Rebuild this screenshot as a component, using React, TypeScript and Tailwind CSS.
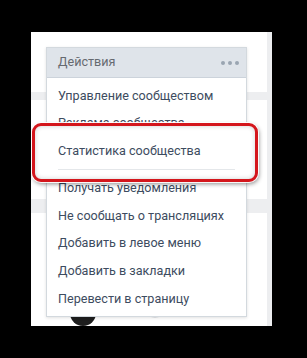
import React from 'react';

const topItems = ['Управление сообществом', 'Реклама сообщества'];
const bottomItems = [
  'Получать уведомления',
  'Не сообщать о трансляциях',
  'Добавить в левое меню',
  'Добавить в закладки',
  'Перевести в страницу',
];

function MenuItem({ label }: { label: string }) {
  return (
    <div className="flex h-[27.6px] items-center px-[11px] text-[12.6px] leading-none text-[#3d4c60]">
      {label}
    </div>
  );
}

export default function App() {
  return (
    <div
      className="h-[358px] w-[307px] bg-black pl-[31px] pt-[32px]"
      style={{ fontFamily: 'Roboto, "Noto Sans", Arial, sans-serif' }}
    >
      <div className="relative flex h-[294px] w-[241px] bg-[#edeef0]">
        {/* page behind the dropdown */}
        <div className="flex w-[236px] flex-col">
          <div className="h-[65px] bg-white" />
          <div className="mt-[8px] h-[108px] bg-white" />
          <div className="mt-[14px] flex flex-1 items-start gap-[50px] bg-white pl-[39px] pt-[87px]">
            <div className="h-[26px] w-[26px] rounded-full bg-[#1e1e1e]" />
            <div className="h-[18px] w-[18px] rounded-full bg-[#e4e6e9]" />
          </div>
        </div>

        {/* dropdown */}
        <div className="absolute left-[15px] top-[15px] w-[201px] border border-[#d3d9de] bg-white shadow-[0_1px_3px_rgba(0,0,0,0.12)]">
          <div className="flex h-[30px] items-center justify-between border-b border-[#ccd3db] bg-[#dfe4ea] pl-[11px] pr-[7px]">
            <span className="text-[12.6px] text-[#666a70]">Действия</span>
            <div className="flex gap-[3px]">
              <span className="h-[4px] w-[4px] rounded-full bg-[#9aa5b1]" />
              <span className="h-[4px] w-[4px] rounded-full bg-[#9aa5b1]" />
              <span className="h-[4px] w-[4px] rounded-full bg-[#9aa5b1]" />
            </div>
          </div>
          <div className="pb-[3px] pt-[4px]">
            {topItems.map((item) => (
              <MenuItem key={item} label={item} />
            ))}

            {/* highlighted row with red frame */}
            <div className="relative">
              <div className="absolute bottom-[-7px] left-[-15px] right-[-12px] top-[-14px] z-[1] rounded-[9px] border-[3px] border-[#d4161c] bg-white shadow-[0_0_0_1px_rgba(255,255,255,0.9),1px_2px_4px_rgba(0,0,0,0.45),inset_0_0_5px_rgba(0,0,0,0.18)]" />
              <div className="relative z-[2]">
                <MenuItem label="Статистика сообщества" />
                <div className="flex h-[10px] items-center px-[11px]">
                  <div className="h-px w-full bg-[#e4e7ea]" />
                </div>
              </div>
            </div>

            {bottomItems.map((item) => (
              <MenuItem key={item} label={item} />
            ))}
          </div>
        </div>
      </div>
    </div>
  );
}
